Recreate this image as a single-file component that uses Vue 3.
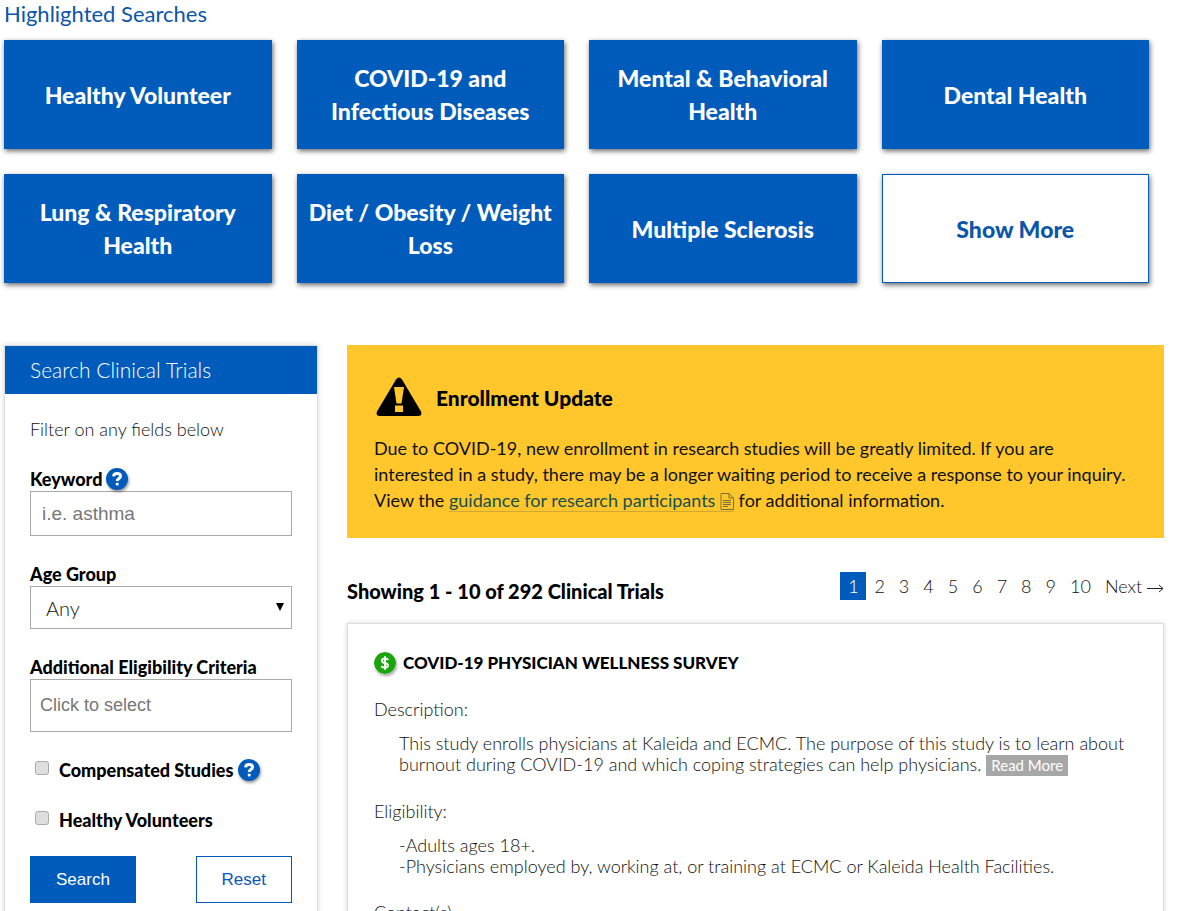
<script setup>
import { ref } from 'vue'

const tiles = [
  'Healthy Volunteer',
  'COVID-19 and Infectious Diseases',
  'Mental & Behavioral Health',
  'Dental Health',
  'Lung & Respiratory Health',
  'Diet / Obesity / Weight Loss',
  'Multiple Sclerosis',
]
const pages = [2, 3, 4, 5, 6, 7, 8, 9, 10]
const keyword = ref('')
const criteria = ref('')
const age = ref('Any')
const compensated = ref(false)
const healthy = ref(false)
</script>

<template>
  <div class="page">
    <section class="highlights">
      <h2>Highlighted Searches</h2>
      <div class="tiles">
        <a v-for="t in tiles" :key="t" class="tile" href="#">{{ t }}</a>
        <button class="tile more" type="button">Show More</button>
      </div>
    </section>

    <div class="columns">
      <form class="filters" @submit.prevent>
        <h2 class="filters-head">Search Clinical Trials</h2>
        <div class="filters-body">
          <p class="intro">Filter on any fields below</p>

          <div class="field">
            <div class="label-row">
              <label for="keyword">Keyword</label>
              <button class="help" type="button" aria-label="Keyword help">
                <svg viewBox="0 0 22 22" aria-hidden="true">
                  <path d="M7.6 8.3C7.8 6.2 9.2 5.5 11 5.5c2.100 0 3.500 1 3.500 2.700 0 2.500-3.300 2.300-3.300 4.800" />
                  <circle cx="11.200" cy="16" r="1.600" />
                </svg>
              </button>
            </div>
            <input id="keyword" v-model="keyword" class="box keyword" type="text" placeholder="i.e. asthma" />
          </div>

          <div class="field">
            <div class="label-row"><label for="age">Age Group</label></div>
            <div class="select-wrap">
              <select id="age" v-model="age" class="box age">
                <option>Any</option>
              </select>
              <svg class="caret" viewBox="0 0 8 8" aria-hidden="true"><path d="M0 0h8L4 8z" /></svg>
            </div>
          </div>

          <div class="field">
            <div class="label-row"><label for="criteria">Additional Eligibility Criteria</label></div>
            <input id="criteria" v-model="criteria" class="box criteria" type="text" placeholder="Click to select" />
          </div>

          <div class="check">
            <input id="compensated" v-model="compensated" type="checkbox" />
            <label for="compensated">Compensated Studies</label>
            <button class="help" type="button" aria-label="Compensated studies help">
              <svg viewBox="0 0 22 22" aria-hidden="true">
                <path d="M7.6 8.3C7.8 6.2 9.2 5.5 11 5.5c2.100 0 3.500 1 3.500 2.700 0 2.500-3.300 2.300-3.300 4.800" />
                <circle cx="11.200" cy="16" r="1.600" />
              </svg>
            </button>
          </div>
          <div class="check">
            <input id="healthy" v-model="healthy" type="checkbox" />
            <label for="healthy">Healthy Volunteers</label>
          </div>

          <div class="actions">
            <button class="btn solid" type="submit">Search</button>
            <button class="btn" type="reset">Reset</button>
          </div>
        </div>
      </form>

      <main>
        <section class="notice">
          <div class="notice-head">
            <svg class="warn" viewBox="0 0 46 40" aria-hidden="true">
              <path class="tri" d="M20 2.500Q23-1.500 26 2.500L45 34.500Q46.500 39 42 39H4Q-.5 39 1 34.500Z" />
              <path class="mark" d="M18 10h10l-2.500 16.500h-5zM19 28.500h8v6.500h-8z" />
            </svg>
            <h3>Enrollment Update</h3>
          </div>
          <p>
            Due to COVID-19, new enrollment in research studies will be greatly limited. If you are
            interested in a study, there may be a longer waiting period to receive a response to your inquiry.
            View the
            <a href="#">guidance for research participants
              <svg class="doc" viewBox="0 0 14 17" aria-hidden="true">
                <path d="M1 .5h8l4.500 4.500v11.500H1zM9 .5V5h4.500M3 7.500h8M3 9.500h8M3 11.500h8M3 13.500h5" />
              </svg></a>
            for additional information.
          </p>
        </section>

        <div class="results-bar">
          <h2>Showing 1 - 10 of 292 Clinical Trials</h2>
          <nav aria-label="Pages">
            <a class="current" href="#" aria-current="page">1</a>
            <a v-for="p in pages" :key="p" href="#">{{ p }}</a>
            <a class="next" href="#">Next
              <svg viewBox="0 0 17 9" aria-hidden="true"><path d="M0 4.500h16M12 1l4 3.500-4 3.500" /></svg>
            </a>
          </nav>
        </div>

        <article class="card">
          <h3>
            <svg class="coin" viewBox="0 0 22 22" aria-hidden="true">
              <circle cx="11" cy="11" r="11" />
              <path d="M14.300 7.700Q13 6.400 11 6.400c-4 0-4 3.900-.4 4.500 4.500.7 4.200 4.700.4 4.700q-2.400 0-3.700-1.400M11 4.300v13.400" />
            </svg>
            COVID-19 PHYSICIAN WELLNESS SURVEY
          </h3>
          <dl>
            <dt>Description:</dt>
            <dd>
              This study enrolls physicians at Kaleida and ECMC. The purpose of this study is to learn about
              burnout during COVID-19 and which coping strategies can help physicians.
              <button class="read" type="button">Read More</button>
            </dd>
            <dt>Eligibility:</dt>
            <dd>-Adults ages 18+.<br />-Physicians employed by, working at, or training at ECMC or Kaleida Health Facilities.</dd>
            <dt>Contact(s)</dt>
          </dl>
        </article>
      </main>
    </div>
  </div>
</template>

<style>
body {
  background: #fff;
}
</style>

<style scoped>
.page {
  --blue: #005bbb;
  box-sizing: border-box;
  height: 100vh;
  overflow: hidden;
  padding: 0 13px 0 4px;
  font-family: Lato, "Liberation Sans", sans-serif;
  font-size: 18px;
  color: #111;
}
*,
*::before {
  box-sizing: border-box;
}
h2,
h3,
p,
dl,
dd {
  margin: 0;
}
a {
  color: inherit;
  text-decoration: none;
}
button {
  font: inherit;
  cursor: pointer;
}
.highlights h2 {
  font-size: 22px;
  font-weight: 400;
  line-height: 28px;
  color: #0b56a8;
}
.tiles {
  display: grid;
  grid-template-columns: repeat(4, 1fr);
  grid-auto-rows: 109px;
  gap: 25px;
  margin: 12px 15px 0 0;
}
.tile {
  display: flex;
  align-items: center;
  justify-content: center;
  padding: 1px 10px 0;
  border: 1px solid var(--blue);
  background: var(--blue);
  box-shadow: 1px 2px 5px rgba(0, 0, 0, 0.6);
  color: #fff;
  font-size: 23px;
  font-weight: 900;
  line-height: 33px;
  text-align: center;
}
.more {
  background: #fff;
  color: #0b56a8;
}
.columns {
  display: grid;
  grid-template-columns: 314px minmax(0, 1fr);
  gap: 29px;
  align-items: start;
  margin-top: 62px;
}
.filters {
  border: 1px solid #ddd;
  box-shadow: 0 0 5px rgba(0, 0, 0, 0.16);
  min-height: 620px;
}
.filters-head {
  padding: 0 25px;
  background: var(--blue);
  color: #fff;
  font-size: 21px;
  font-weight: 300;
  line-height: 48px;
}
.filters-body {
  padding: 23px 25px;
}
.intro {
  font-weight: 300;
  line-height: 24px;
}
.field {
  margin-top: 26px;
}
.label-row {
  display: flex;
  align-items: center;
  gap: 4px;
  height: 24px;
}
.filters label {
  color: #000;
  font-size: 18px;
  font-weight: 900;
}
.help {
  width: 22px;
  height: 22px;
  padding: 0;
  border: 0;
  border-radius: 50%;
  background: var(--blue);
  box-shadow: 1px 2px 3px rgba(0, 0, 0, 0.4);
}
.help svg {
  display: block;
}
.help path {
  fill: none;
  stroke: #fff;
  stroke-width: 3;
}
.help circle {
  fill: #fff;
}
.box {
  display: block;
  width: 100%;
  margin: 0;
  border: 1px solid #a9a9a9;
  border-radius: 0;
  background: #fff;
  color: #111;
  font: 18px "Liberation Sans", Arial, sans-serif;
}
.box::placeholder {
  color: #777;
}
.keyword {
  height: 45px;
  padding: 0 11px;
  font-size: 19px;
}
.select-wrap {
  position: relative;
}
.age {
  height: 43px;
  padding: 0 15px;
  appearance: none;
  font-family: Lato, "Liberation Sans", sans-serif;
  font-size: 20px;
  font-weight: 300;
}
.caret {
  position: absolute;
  top: 17px;
  right: 8px;
  width: 8px;
  height: 8px;
}
.criteria {
  height: 53px;
  padding: 0 9px;
}
.check {
  display: flex;
  align-items: center;
  height: 25px;
  margin-top: 25px;
}
.check input {
  appearance: none;
  width: 14px;
  height: 14px;
  margin: 0 10px 4px 5px;
  border: 1px solid #aaa;
  border-radius: 3px;
  background: #dedede;
}
.check input:checked {
  background: var(--blue);
}
.check .help {
  margin-left: 5px;
}
.actions {
  display: flex;
  justify-content: space-between;
  margin-top: 24px;
}
.btn {
  height: 47px;
  padding: 0 25px;
  border: 1px solid var(--blue);
  background: #fff;
  color: #0b56bb;
  font: 17px "Liberation Sans", Arial, sans-serif;
}
.solid {
  background: var(--blue);
  color: #fff;
}
.notice {
  padding: 32px 27px 25px;
  background: #ffc72c;
}
.notice-head {
  display: flex;
  align-items: center;
  gap: 14px;
  height: 40px;
}
.warn {
  width: 46px;
  height: 40px;
  margin-left: 2px;
}
.mark {
  fill: #ffc72c;
}
h3 {
  color: #000;
  font-size: 21px;
  font-weight: 900;
}
.notice p {
  margin-top: 18px;
  color: #111;
  font-size: 18px;
  line-height: 26px;
}
.notice a {
  border-bottom: 1px solid #d3a832;
  color: #174f50;
}
.doc {
  width: 14px;
  height: 17px;
  vertical-align: -3px;
  fill: none;
  stroke: #77703c;
}
.results-bar {
  display: flex;
  align-items: flex-start;
  justify-content: space-between;
  margin-top: 34px;
}
.results-bar h2 {
  margin-top: 6px;
  color: #000;
  font-size: 20px;
  font-weight: 900;
  line-height: 26px;
}
nav {
  display: flex;
  gap: 14px;
  font-weight: 300;
  line-height: 28px;
}
.current {
  width: 26px;
  margin-right: -6px;
  background: var(--blue);
  color: #fff;
  text-align: center;
}
.next svg {
  width: 17px;
  height: 9px;
  fill: none;
  stroke: #222;
}
.card {
  min-height: 320px;
  margin-top: 19px;
  padding: 26px;
  border: 1px solid #ddd;
  box-shadow: 0 0 5px rgba(0, 0, 0, 0.16);
}
.card h3 {
  display: flex;
  align-items: center;
  gap: 7px;
  font-size: 17px;
  line-height: 26px;
}
.coin {
  width: 22px;
  height: 22px;
  border-radius: 50%;
  box-shadow: 1px 2px 3px rgba(0, 0, 0, 0.35);
}
.coin circle {
  fill: #1aa50c;
}
.coin path {
  fill: none;
  stroke: #fff;
  stroke-width: 2;
}
dl {
  font-weight: 300;
}
dt {
  margin-top: 22px;
  line-height: 22px;
}
dd {
  margin: 13px 0 0 25px;
  line-height: 21px;
}
dd + dt {
  margin-top: 24px;
}
.read {
  height: 21px;
  padding: 0 5px;
  border: 0;
  background: #a7a7a7;
  color: #fff;
  font-size: 15px;
  font-weight: 400;
  line-height: 21px;
}
</style>
